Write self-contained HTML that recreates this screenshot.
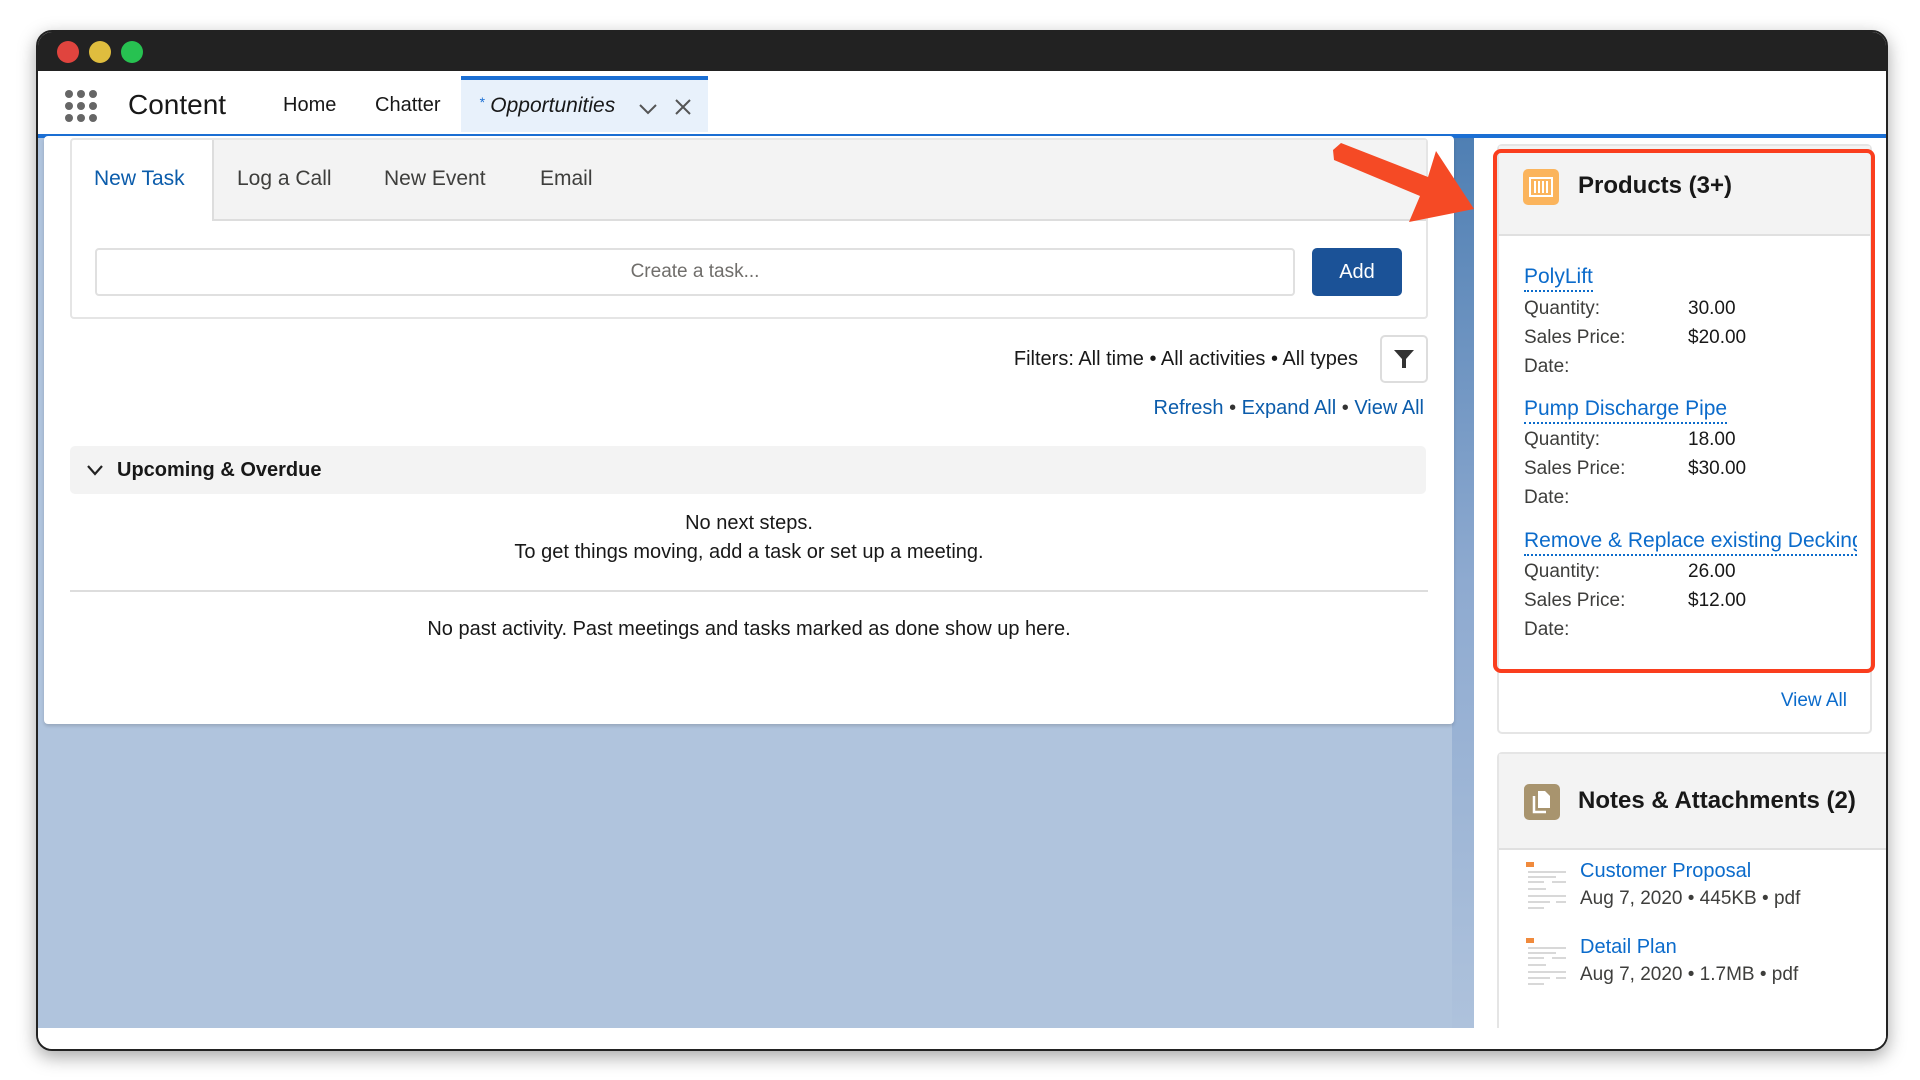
<!DOCTYPE html>
<html><head><meta charset="utf-8"><style>
*{margin:0;padding:0;box-sizing:border-box}
body{width:1920px;height:1080px;background:#fff;font-family:"Liberation Sans",sans-serif;position:relative;overflow:hidden;color:#181818}
.a{position:absolute;white-space:nowrap}
.win{position:absolute;left:36px;top:30px;width:1852px;height:1021px;border-radius:16px;background:#fff;border:2px solid #222;box-shadow:0 6px 18px rgba(0,0,0,.35);overflow:hidden}
.lbl{color:#3e3e3c;font-size:19px}
.val{color:#181818;font-size:19px}
.pl{font-size:21px;color:#0b6bcb;border-bottom:2px dotted #0b6bcb;line-height:26px}
</style></head><body>
<div class="win">
 <div class="a" style="left:0;top:0;width:1852px;height:39px;background:#222"></div>
 <div class="a" style="left:19px;top:9px;width:22px;height:22px;border-radius:50%;background:#e0443e"></div>
 <div class="a" style="left:51px;top:9px;width:22px;height:22px;border-radius:50%;background:#dfbd3e"></div>
 <div class="a" style="left:83px;top:9px;width:22px;height:22px;border-radius:50%;background:#27c251"></div>
 <div class="a" style="left:0;top:39px;width:1852px;height:63px;background:#fff"></div>
 <svg class="a" style="left:26px;top:57px" width="34" height="34" viewBox="0 0 34 34" fill="#666">
  <circle cx="5" cy="5" r="4"/><circle cx="17" cy="5" r="4"/><circle cx="29" cy="5" r="4"/>
  <circle cx="5" cy="17" r="4"/><circle cx="17" cy="17" r="4"/><circle cx="29" cy="17" r="4"/>
  <circle cx="5" cy="29" r="4"/><circle cx="17" cy="29" r="4"/><circle cx="29" cy="29" r="4"/></svg>
 <div class="a" style="left:90px;top:57px;font-size:28px">Content</div>
 <div class="a" style="left:245px;top:62px;font-size:20px">Home</div>
 <div class="a" style="left:337px;top:62px;font-size:20px">Chatter</div>
 <div class="a" style="left:423px;top:44px;width:247px;height:56px;background:#e8f1fb;border-top:4px solid #1b6fd4"></div>
 <div class="a" style="left:441px;top:62px;font-size:21px;font-style:italic"><span style="color:#1b6fd4;font-size:14px;vertical-align:top">*</span> Opportunities</div>
 <svg class="a" style="left:600px;top:70px" width="20" height="14"><path d="M2 3 L10 11 L18 3" stroke="#555" stroke-width="2" fill="none"/></svg>
 <svg class="a" style="left:636px;top:66px" width="18" height="18"><path d="M2 2L16 16M16 2L2 16" stroke="#555" stroke-width="2"/></svg>
 <div class="a" style="left:0;top:102px;width:1852px;height:4px;background:#1b6fd4"></div>
 <div class="a" style="left:0;top:106px;width:1852px;height:890px;background:#b0c4dd"></div>
 <div class="a" style="left:1414px;top:106px;width:22px;height:890px;background:linear-gradient(#4f7fb3,#8eaad0 50%,#aec2dc)"></div>
 <div class="a" style="left:1436px;top:106px;width:416px;height:890px;background:#fff"></div>
 <div class="a" style="left:6px;top:104px;width:1410px;height:588px;background:#fff;border-radius:4px;box-shadow:0 2px 3px rgba(0,0,0,.15)"></div>
 <div class="a" style="left:32px;top:106px;width:1358px;height:181px;border:2px solid #e5e5e5;border-radius:4px"></div>
 <div class="a" style="left:174px;top:108px;width:1214px;height:81px;background:#f3f3f3;border-bottom:2px solid #ddd;border-left:2px solid #ddd"></div>
 <div class="a" style="left:56px;top:135px;font-size:21px;color:#0b5cab">New Task</div>
 <div class="a" style="left:199px;top:135px;font-size:21px;color:#3e3e3c">Log a Call</div>
 <div class="a" style="left:346px;top:135px;font-size:21px;color:#3e3e3c">New Event</div>
 <div class="a" style="left:502px;top:135px;font-size:21px;color:#3e3e3c">Email</div>
 <div class="a" style="left:57px;top:216px;width:1200px;height:48px;border:2px solid #e0e0e0;border-radius:4px;text-align:center;line-height:44px;font-size:19px;color:#706e6b">Create a task...</div>
 <div class="a" style="left:1274px;top:216px;width:90px;height:48px;background:#1b5297;border-radius:5px;color:#fff;text-align:center;line-height:48px;font-size:20px">Add</div>
 <div class="a" style="right:528px;top:316px;font-size:20px">Filters: All time • All activities • All types</div>
 <div class="a" style="left:1342px;top:303px;width:48px;height:48px;border:2px solid #ddd;border-radius:5px"></div>
 <svg class="a" style="left:1355px;top:316px" width="22" height="22"><path d="M1 2H21L13 11V20H9V11Z" fill="#333"/></svg>
 <div class="a" style="right:462px;top:365px;font-size:20px;color:#0b5cab">Refresh <span style="color:#333">•</span> Expand All <span style="color:#333">•</span> View All</div>
 <div class="a" style="left:32px;top:414px;width:1356px;height:48px;background:#f3f3f3;border-radius:5px"></div>
 <svg class="a" style="left:48px;top:432px" width="18" height="14"><path d="M2 2L9 10L16 2" stroke="#222" stroke-width="2.2" fill="none"/></svg>
 <div class="a" style="left:79px;top:427px;font-size:20px;font-weight:bold">Upcoming &amp; Overdue</div>
 <div class="a" style="left:6px;width:1410px;top:477px;text-align:center;font-size:20px;line-height:29px">No next steps.<br>To get things moving, add a task or set up a meeting.</div>
 <div class="a" style="left:32px;top:558px;width:1358px;height:2px;background:#ddd"></div>
 <div class="a" style="left:6px;width:1410px;top:586px;text-align:center;font-size:20px">No past activity. Past meetings and tasks marked as done show up here.</div>
 <div class="a" style="left:1459px;top:112px;width:375px;height:590px;border:2px solid #e5e5e5;border-radius:5px;background:#fff"></div>
 <div class="a" style="left:1461px;top:114px;width:371px;height:90px;background:#f3f3f3;border-bottom:2px solid #e0e0e0"></div>
 <div class="a" style="left:1485px;top:137px;width:36px;height:36px;background:#fbb45c;border-radius:5px"></div>
 <svg class="a" style="left:1491px;top:145px" width="24" height="20"><rect x="1" y="1" width="22" height="18" fill="none" stroke="#fff" stroke-width="2"/><path d="M6 4V16M10 4V16M14 4V16M18 4V16" stroke="#fff" stroke-width="2"/></svg>
 <div class="a" style="left:1540px;top:140px;font-size:24px;font-weight:bold">Products (3+)</div>
 <div class="a pl" style="left:1486px;top:232px">PolyLift</div>
 <div class="a lbl" style="left:1486px;top:266px">Quantity:</div><div class="a val" style="left:1650px;top:266px">30.00</div>
 <div class="a lbl" style="left:1486px;top:295px">Sales Price:</div><div class="a val" style="left:1650px;top:295px">$20.00</div>
 <div class="a lbl" style="left:1486px;top:324px">Date:</div>
 <div class="a pl" style="left:1486px;top:364px">Pump Discharge Pipe</div>
 <div class="a lbl" style="left:1486px;top:397px">Quantity:</div><div class="a val" style="left:1650px;top:397px">18.00</div>
 <div class="a lbl" style="left:1486px;top:426px">Sales Price:</div><div class="a val" style="left:1650px;top:426px">$30.00</div>
 <div class="a lbl" style="left:1486px;top:455px">Date:</div>
 <div class="a pl" style="left:1486px;top:496px;width:333px;overflow:hidden">Remove &amp; Replace existing Decking</div>
 <div class="a lbl" style="left:1486px;top:529px">Quantity:</div><div class="a val" style="left:1650px;top:529px">26.00</div>
 <div class="a lbl" style="left:1486px;top:558px">Sales Price:</div><div class="a val" style="left:1650px;top:558px">$12.00</div>
 <div class="a lbl" style="left:1486px;top:587px">Date:</div>
 <div class="a" style="right:39px;top:658px;font-size:19px;color:#0b6bcb">View All</div>
 <div class="a" style="left:1455px;top:117px;width:382px;height:524px;border:4px solid #fa3e1e;border-radius:8px"></div>
 <div class="a" style="left:1459px;top:720px;width:420px;height:300px;border:2px solid #e5e5e5;border-radius:5px;background:#fff"></div>
 <div class="a" style="left:1461px;top:722px;width:420px;height:96px;background:#f3f3f3;border-bottom:2px solid #e0e0e0"></div>
 <div class="a" style="left:1486px;top:752px;width:36px;height:36px;background:#a8946e;border-radius:5px"></div>
 <svg class="a" style="left:1492px;top:757px" width="24" height="26"><path d="M8 2H15L20 7V19H8Z" fill="#fff"/><path d="M4 7V23H16" stroke="#fff" stroke-width="2.5" fill="none"/></svg>
 <div class="a" style="left:1540px;top:755px;font-size:24px;font-weight:bold">Notes &amp; Attachments (2)</div>
 <svg class="a" style="left:1488px;top:830px" width="42" height="52"><rect x="0" y="0" width="8" height="5" fill="#f08a3c"/><g stroke="#ccc" stroke-width="1.5"><path d="M2 10H40M2 15H30M2 20H18M26 20H40M2 27H20M2 34H40M2 40H24M30 40H40M2 46H18"/></g></svg>
 <div class="a" style="left:1542px;top:828px;font-size:20px;color:#0b6bcb">Customer Proposal</div>
 <div class="a" style="left:1542px;top:856px;font-size:19px;color:#3e3e3c">Aug 7, 2020 • 445KB • pdf</div>
 <svg class="a" style="left:1488px;top:906px" width="42" height="52"><rect x="0" y="0" width="8" height="5" fill="#f08a3c"/><g stroke="#ccc" stroke-width="1.5"><path d="M2 10H40M2 15H30M2 20H18M26 20H40M2 27H20M2 34H40M2 40H24M30 40H40M2 46H18"/></g></svg>
 <div class="a" style="left:1542px;top:904px;font-size:20px;color:#0b6bcb">Detail Plan</div>
 <div class="a" style="left:1542px;top:932px;font-size:19px;color:#3e3e3c">Aug 7, 2020 • 1.7MB • pdf</div>
 <div class="a" style="left:0;top:996px;width:1852px;height:30px;background:#fff"></div>
</div>
<svg class="a" style="left:0;top:0" width="1920" height="300"><polygon points="1333,150 1341,143 1428,177 1436,151 1474,209 1409,222 1420,196 1334,160" fill="#f54a25"/></svg>
</body></html>
